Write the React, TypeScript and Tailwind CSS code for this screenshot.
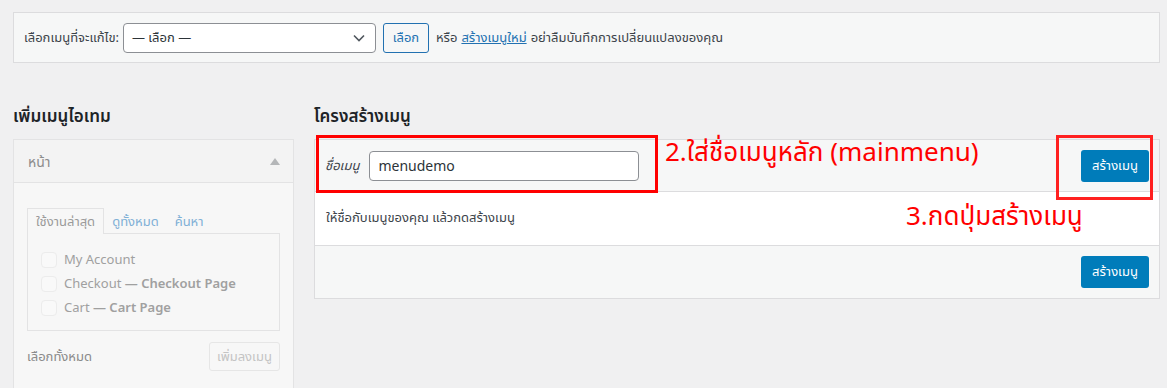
import React from 'react';

const font = "font-['Segoe_UI','Noto_Sans','Noto_Sans_Thai','Leelawadee_UI',Tahoma,sans-serif]";

function CreateButton() {
    return (
        <button className="h-[32px] w-[68px] rounded-[3px] bg-[#007cba] text-[13px] text-white">
            สร้างเมนู
        </button>
    );
}

function CheckRow({ label, bold }: { label: string; bold?: string }) {
    return (
        <div className="flex h-[24px] items-center">
            <span className="h-[16px] w-[16px] rounded-[4px] border border-[#ececec] bg-[#f9f9f9]"></span>
            <span className="ml-[7px] text-[13px] text-[#a0a0a0]">
                {label}
                {bold && <span className="font-semibold"> — {bold}</span>}
            </span>
        </div>
    );
}

export default function App() {
    return (
        <div className={`min-h-screen bg-[#f0f0f1] pt-[12px] pl-[13px] pr-[7px] text-[#3c434a] ${font}`}>
            {/* เลือกเมนู */}
            <div className="flex h-[51px] items-center border border-[#dcdcde] bg-[#f6f7f7] pl-[10px] text-[13px]">
                <span>เลือกเมนูที่จะแก้ไข:</span>
                <div className="ml-[4px] flex h-[30px] w-[253px] items-center justify-between rounded-[4px] border border-[#8c8f94] bg-white pl-[8px] pr-[10px] text-[#2c3338]">
                    <span>— เลือก —</span>
                    <svg width="12" height="8" viewBox="0 0 12 8" fill="none">
                        <path d="M1 1.5l5 5 5-5" stroke="#50575e" strokeWidth="1.6" />
                    </svg>
                </div>
                <button className="ml-[7px] h-[30px] w-[46px] rounded-[3px] border border-[#2271b1] bg-[#f6f7f7] text-[13px] text-[#2271b1]">
                    เลือก
                </button>
                <span className="ml-[7px]">หรือ</span>
                <a className="ml-[4px] text-[#2271b1] underline">สร้างเมนูใหม่</a>
                <span className="ml-[4px]">อย่าลืมบันทึกการเปลี่ยนแปลงของคุณ</span>
            </div>

            <div className="mt-[36px] flex gap-[20px]">
                {/* left */}
                <div className="w-[281px] shrink-0">
                    <h2 className="h-[34px] text-[17px] font-semibold leading-[34px] text-[#1d2327]">เพิ่มเมนูไอเทม</h2>
                    <div className="mt-[6px] border border-[#e3e3e4] bg-[#f7f7f7]">
                        <div className="flex h-[43px] items-center justify-between border-b border-[#e3e3e4] bg-[#f3f3f3] pl-[14px] pr-[13px]">
                            <span className="text-[14px] text-[#8c8c8c]">หน้า</span>
                            <svg width="10" height="7" viewBox="0 0 10 7">
                                <path d="M5 0L10 7H0z" fill="#b4b6b8" />
                            </svg>
                        </div>
                        <div className="px-[13px] pt-[24px] pb-[30px]">
                            <div className="flex items-end text-[13px]">
                                <div className="relative top-[1px] h-[26px] border border-b-0 border-[#e3e3e4] bg-[#f7f7f7] px-[8px] leading-[24px] text-[#9a9a9a]">
                                    ใช้งานล่าสุด
                                </div>
                                <span className="ml-[8px] leading-[24px] text-[#7fb0d6]">ดูทั้งหมด</span>
                                <span className="ml-[16px] leading-[24px] text-[#7fb0d6]">ค้นหา</span>
                            </div>
                            <div className="h-[98px] border border-[#e3e3e4] pl-[13px] pt-[14px]">
                                <CheckRow label="My Account" />
                                <CheckRow label="Checkout" bold="Checkout Page" />
                                <CheckRow label="Cart" bold="Cart Page" />
                            </div>
                            <div className="mt-[11px] flex items-center justify-between">
                                <span className="text-[13px] text-[#8a8a8a]">เลือกทั้งหมด</span>
                                <button className="h-[29px] w-[71px] rounded-[3px] border border-[#e6e6e6] bg-[#f7f7f7] text-[13px] text-[#c4c4c4]">
                                    เพิ่มลงเมนู
                                </button>
                            </div>
                        </div>
                    </div>
                </div>

                {/* right */}
                <div className="min-w-0 flex-1">
                    <h2 className="h-[34px] text-[17px] font-semibold leading-[34px] text-[#1d2327]">โครงสร้างเมนู</h2>
                    <div className="mt-[6px] border border-[#dcdcde] bg-white">
                        <div className="relative flex h-[52px] items-center justify-between border-b border-[#dcdcde] bg-[#f6f7f7] pl-[10px] pr-[10px]">
                            <div className="flex items-center">
                                <span className="text-[13px] italic text-[#3c434a]">ชื่อเมนู</span>
                                <div className="ml-[10px] flex h-[30px] w-[270px] items-center rounded-[4px] border border-[#8c8f94] bg-white px-[8px] text-[14px] text-[#2c3338]">
                                    menudemo
                                </div>
                            </div>
                            <CreateButton />
                            <div className="absolute left-[1px] top-[-5px] h-[58px] w-[342px] border-[3px] border-[#ff0000]"></div>
                            <div className="absolute right-[6px] top-[-5px] h-[65px] w-[97px] border-[3px] border-[#ff2020]"></div>
                            <div className="absolute left-[350px] top-[-9px] whitespace-nowrap text-[26px] leading-[40px] text-[#ff0000]">
                                2.ใส่ชื่อเมนูหลัก (mainmenu)
                            </div>
                        </div>
                        <div className="relative flex h-[54px] items-start border-b border-[#dcdcde] pl-[11px] pt-[16px] text-[13px] text-[#3c434a]">
                            ให้ชื่อกับเมนูของคุณ แล้วกดสร้างเมนู
                            <div className="absolute left-[591px] top-[3px] whitespace-nowrap text-[26px] leading-[40px] text-[#ff0000]">
                                3.กดปุ่มสร้างเมนู
                            </div>
                        </div>
                        <div className="flex h-[52px] items-center justify-end bg-[#f6f7f7] pr-[10px]">
                            <CreateButton />
                        </div>
                    </div>
                </div>
            </div>
        </div>
    );
}
